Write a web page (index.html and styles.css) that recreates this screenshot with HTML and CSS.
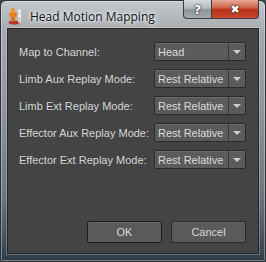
FILE: index.html
```html
<!DOCTYPE html>
<html lang="en">
<head>
  <meta charset="UTF-8" />
  <title>Head Motion Mapping</title>
  <link rel="stylesheet" href="styles.css">
</head>
<body>
  <div class="window">
    <div class="titlebar">
      <svg class="app-icon" width="16" height="18" viewBox="0 0 16 18">
        <ellipse cx="6" cy="15.5" rx="5.5" ry="2" fill="#b8302a"/>
        <circle cx="5" cy="3" r="2" fill="#f09020"/>
        <rect x="3" y="5" width="4" height="6" rx="1" fill="#f08018"/>
        <rect x="1.5" y="5.5" width="1.5" height="4" fill="#e07010"/>
        <rect x="7" y="5.5" width="1.5" height="4" fill="#e07010"/>
        <rect x="3" y="10" width="1.6" height="5" fill="#d86810"/>
        <rect x="5.4" y="10" width="1.6" height="5" fill="#d86810"/>
        <circle cx="11.5" cy="4" r="1.8" fill="#f4f0e8"/>
        <rect x="10" y="6" width="3.2" height="5" rx="1" fill="#ece8e0"/>
        <rect x="10" y="10.5" width="1.3" height="5" fill="#dcd8d0"/>
        <rect x="11.9" y="10.5" width="1.3" height="5" fill="#dcd8d0"/>
      </svg>
      <span class="title">Head Motion Mapping</span>
      <div class="caption-buttons">
        <div class="cap-btn help">?</div>
        <div class="cap-btn close">&#x2716;</div>
      </div>
    </div>

    <div class="client">
      <div class="form">
        <div class="row">
          <span class="label">Map to Channel:</span>
          <div class="combo"><span class="value">Head</span><span class="arrow"></span></div>
        </div>
        <div class="row">
          <span class="label">Limb Aux Replay Mode:</span>
          <div class="combo"><span class="value">Rest Relative</span><span class="arrow"></span></div>
        </div>
        <div class="row">
          <span class="label">Limb Ext Replay Mode:</span>
          <div class="combo"><span class="value">Rest Relative</span><span class="arrow"></span></div>
        </div>
        <div class="row">
          <span class="label">Effector Aux Replay Mode:</span>
          <div class="combo"><span class="value">Rest Relative</span><span class="arrow"></span></div>
        </div>
        <div class="row">
          <span class="label">Effector Ext Replay Mode:</span>
          <div class="combo"><span class="value">Rest Relative</span><span class="arrow"></span></div>
        </div>
      </div>

      <div class="buttons">
        <button class="btn default">OK</button>
        <button class="btn">Cancel</button>
      </div>
    </div>
  </div>
</body>
</html>
```

FILE: styles.css
```css
html, body {
  margin: 0;
  padding: 0;
  background: #3a4650;
}
.window {
  width: 266px;
  height: 262px;
  box-sizing: border-box;
  border: 1px solid #2c3238;
  border-radius: 6px 6px 2px 2px;
  padding: 0 6px 7px 6px;
  background: linear-gradient(to bottom, #c4c8cc 0%, #a4a9ae 12%, #8c9298 45%, #6c757d 75%, #3f4d58 94%, #2c3a46 100%);
  box-shadow: inset 0 0 0 1px rgba(255,255,255,0.35);
  display: flex;
  flex-direction: column;
  font-family: "Liberation Sans", sans-serif;
}
.titlebar {
  height: 27px;
  display: flex;
  align-items: flex-start;
  position: relative;
}
.app-icon {
  margin: 6px 0 0 1px;
}
.title {
  margin: 7px 0 0 6px;
  font-family: "Open Sans", sans-serif;
  font-size: 12px;
  color: #111;
  text-shadow: 0 0 6px #fff, 0 0 3px #fff;
}
.caption-buttons {
  position: absolute;
  top: -1px;
  right: 0;
  display: flex;
}
.cap-btn {
  height: 19px;
  border: 1px solid #3a3e44;
  border-top: none;
  box-sizing: border-box;
  display: flex;
  align-items: center;
  justify-content: center;
  color: #fff;
  font-family: "DejaVu Sans", sans-serif;
  font-weight: bold;
  text-shadow: 0 0 2px #222, 0 0 1px #000;
}
.help {
  width: 29px;
  border-radius: 0 0 0 4px;
  font-size: 13px;
  background: linear-gradient(to bottom, #d8dade 0%, #b4b8bc 45%, #8e9398 55%, #a4a9ae 100%);
}
.close {
  width: 47px;
  border-left: none;
  border-radius: 0 0 4px 0;
  font-size: 11px;
  background: linear-gradient(to bottom, #e8a898 0%, #d06a50 40%, #b83018 55%, #c84a30 100%);
}
.client {
  flex: 1;
  background: #444444;
  border: 1px solid #262626;
  box-shadow: 0 0 0 1px rgba(255,255,255,0.25);
  display: flex;
  flex-direction: column;
  justify-content: space-between;
  padding: 13px 12px 10px 11px;
}
.form {
  display: flex;
  flex-direction: column;
  gap: 8px;
}
.row {
  display: flex;
  align-items: center;
  justify-content: space-between;
  height: 19px;
}
.label {
  font-size: 11px;
  color: #d6d6d6;
  white-space: nowrap;
}
.combo {
  width: 92px;
  height: 19px;
  box-sizing: border-box;
  border: 1px solid #2a2a2a;
  border-radius: 2px;
  background: #5b5b5b;
  box-shadow: inset 0 1px 0 #6a6a6a;
  display: flex;
  align-items: center;
}
.value {
  flex: 1;
  padding-left: 3px;
  font-size: 11px;
  color: #dcdcdc;
  white-space: nowrap;
}
.arrow {
  width: 16px;
  height: 17px;
  border-left: 1px solid #3a3a3a;
  position: relative;
}
.arrow::after {
  content: "";
  position: absolute;
  left: 4px;
  top: 7px;
  border-left: 4px solid transparent;
  border-right: 4px solid transparent;
  border-top: 4px solid #cfcfcf;
}
.buttons {
  display: flex;
  justify-content: flex-end;
  gap: 9px;
}
.btn {
  width: 75px;
  height: 22px;
  border: 1px solid #2a2a2a;
  border-radius: 2px;
  background: #5a5a5a;
  box-shadow: inset 0 1px 0 #666;
  color: #d8d8d8;
  font-family: "Liberation Sans", sans-serif;
  font-size: 11px;
  padding: 0;
}
.btn.default {
  border-color: #1c1c1c;
}
```
